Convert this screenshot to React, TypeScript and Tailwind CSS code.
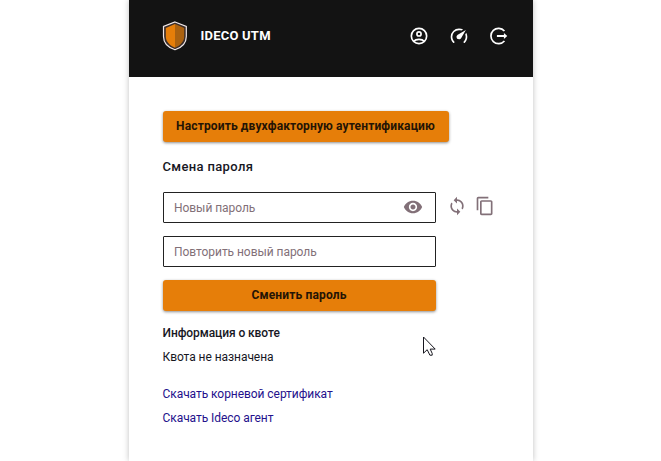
import type { ReactNode } from "react";

function Icon({ children, className = "" }: { children: ReactNode; className?: string }) {
  return (
    <svg viewBox="0 0 24 24" className={`h-5 w-5 shrink-0 ${className}`} fill="currentColor" aria-hidden="true">
      {children}
    </svg>
  );
}

function Shield() {
  return (
    <svg viewBox="0 0 26 30" className="h-[30px] w-[26px]" aria-hidden="true">
      <path d="M13 1 24.300 5.500v10c0 6-4.300 11-11.300 13.300C6 26.500 1.500 21.500 1.500 15.500v-10Z" fill="#3b2d29" stroke="#f1e9ea" strokeWidth="1.2" />
      <path d="M13 3 3.800 6.900v8.600c0 4.800 3.600 9 9.200 11.300Z" fill="#e67e09" />
      <path d="M13 3l9.200 3.900v8.600c0 4.800-3.600 9-9.200 11.300Z" fill="#ab6210" />
    </svg>
  );
}

function Header() {
  return (
    <header className="flex h-[77px] items-start bg-[#131313] pt-[21px] pr-6 pl-[33px] text-white">
      <Shield />
      <span className="mt-[5px] ml-[13px] text-[13px] leading-5 font-bold tracking-[0.22px]">IDECO UTM</span>
      <nav className="mt-[5px] ml-auto flex gap-5">
        <Icon>
          <g fill="none" stroke="currentColor" strokeWidth="2">
            <circle cx="12" cy="12" r="9.200" />
            <circle cx="12" cy="9.500" r="2.500" />
            <path d="M5.700 18.300C7 16.800 9.500 16 12 16s5 .8 6.300 2.300" />
          </g>
        </Icon>
        <Icon>
          <path d="M12 16A3 3 0 0 1 9 13C9 11.880 9.610 10.900 10.500 10.390L20.210 4.770L14.680 14.350C14.180 15.330 13.170 16 12 16M12 3C13.810 3 15.500 3.500 16.970 4.320L14.870 5.530C14 5.190 13 5 12 5A8 8 0 0 0 4 13C4 15.210 4.890 17.210 6.340 18.650H6.350C6.740 19.040 6.740 19.670 6.350 20.060C5.960 20.450 5.320 20.450 4.930 20.070C3.120 18.260 2 15.760 2 13A10 10 0 0 1 12 3M22 13C22 15.760 20.880 18.260 19.070 20.070C18.680 20.450 18.050 20.450 17.660 20.060C17.270 19.670 17.270 19.040 17.660 18.650C19.110 17.200 20 15.210 20 13C20 12 19.810 11 19.460 10.100L20.670 8C21.500 9.500 22 11.180 22 13Z" />
        </Icon>
        <Icon>
          <path d="M18.500 6A9.200 9.200 0 1 0 18.500 18" fill="none" stroke="currentColor" strokeWidth="2" />
          <path d="M9.500 10.900h8.400V8.300l4 3.700-4 3.700v-2.600H9.500Z" />
        </Icon>
      </nav>
    </header>
  );
}

const buttonClass =
  "flex h-[31px] items-center justify-center rounded-[3px] bg-[#e67e09] pb-px text-[12px] font-bold text-[#241405] shadow-[0_1px_3px_rgba(0,0,0,0.45)]";
const fieldClass =
  "flex h-[31px] w-[273px] items-center rounded-[1px] border border-[#222] pr-3 pl-[10.500px] text-[12px] text-[#827078]";
const inputClass = "min-w-0 flex-1 bg-transparent tracking-[-0.05px] outline-none placeholder:text-[#827078]";

export default function App() {
  return (
    <div className="flex h-screen justify-center overflow-hidden bg-white font-[Roboto,sans-serif]">
      <main className="relative h-full w-[404px] bg-white text-[#17171f] shadow-[0_0_6px_rgba(0,0,0,0.25)]">
        <Header />
        <div className="flex flex-col items-start pt-[34px] pl-[34px]">
          <button className={`${buttonClass} w-[286px] tracking-[0.14px]`}>Настроить двухфакторную аутентификацию</button>
          <h1 className="mt-[15px] text-[13px] leading-5 font-medium tracking-[0.35px]">Смена пароля</h1>
          <div className="mt-[15px] flex items-center">
            <div className={fieldClass}>
              <input className={inputClass} placeholder="Новый пароль" />
              <Icon className="mb-[2px] text-[#827078]">
                <path d="M12 4.500C7 4.500 2.730 7.610 1 12c1.730 4.390 6 7.500 11 7.500s9.270-3.110 11-7.500c-1.730-4.390-6-7.500-11-7.500zM12 17c-2.760 0-5-2.240-5-5s2.240-5 5-5 5 2.240 5 5-2.240 5-5 5zm0-8c-1.660 0-3 1.340-3 3s1.340 3 3 3 3-1.340 3-3-1.340-3-3-3z" />
              </Icon>
            </div>
            <div className="mb-[3px] ml-[11px] flex gap-2 text-[#827078]">
              <Icon>
                <path d="M12 4V1L8 5l4 4V6c3.310 0 6 2.690 6 6 0 1.010-.25 1.970-.7 2.800l1.460 1.460C19.540 15.030 20 13.570 20 12c0-4.420-3.580-8-8-8zm0 14c-3.310 0-6-2.690-6-6 0-1.010.25-1.970.7-2.800L5.240 7.740C4.460 8.970 4 10.430 4 12c0 4.420 3.580 8 8 8v3l4-4-4-4v3z" />
              </Icon>
              <Icon>
                <path d="M16 1H4c-1.100 0-2 .9-2 2v14h2V3h12V1zm3 4H8c-1.100 0-2 .9-2 2v14c0 1.100.9 2 2 2h11c1.100 0 2-.9 2-2V7c0-1.100-.9-2-2-2zm0 16H8V7h11v14z" />
              </Icon>
            </div>
          </div>
          <div className={`${fieldClass} mt-[13px]`}>
            <input className={inputClass} placeholder="Повторить новый пароль" />
          </div>
          <button className={`${buttonClass} mt-[13px] w-[273px] tracking-[0.16px]`}>Сменить пароль</button>
          <h2 className="mt-[10px] text-[12px] leading-6 font-medium tracking-[-0.08px]">Информация о квоте</h2>
          <p className="text-[12px] leading-6 tracking-[-0.06px]">Квота не назначена</p>
          <div className="mt-[13px] flex flex-col text-[12px] leading-6 tracking-[-0.06px] text-[#24118c]">
            <a>Скачать корневой сертификат</a>
            <a>Скачать Ideco агент</a>
          </div>
        </div>
        <svg viewBox="0 0 13 20" className="absolute top-[336px] left-[294px] h-5 w-[13px]" aria-hidden="true">
          <path d="M.5 1v16.200l3.700-3.500 2.700 5.500h2.300v-1.800l-2-4.300h5Z" fill="white" stroke="#17171f" strokeWidth="1" />
        </svg>
      </main>
    </div>
  );
}
